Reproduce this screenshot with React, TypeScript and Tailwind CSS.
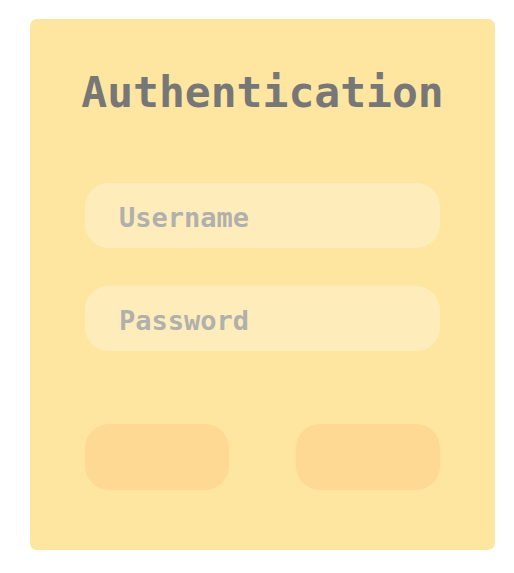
export default function App() {
  return (
    <div className="h-[573px] w-[514px] bg-white pt-[19px] pl-[30px]">
      <div className="flex h-[531px] w-[465px] flex-col items-center rounded-[7px] bg-[#fee6a1] pt-[52px] font-['DejaVu_Sans_Mono','Liberation_Mono',monospace]">
        <h1 className="text-[43px] leading-[43px] font-bold text-[#777777]">
          Authentication
        </h1>
        <div className="mt-[69px] flex w-[355px] flex-col gap-[38px]">
          <input
            placeholder="Username"
            className="h-[65px] w-full rounded-[24px] bg-[#feedbb] pt-[3px] pl-[34px] text-[27px] font-bold text-[#777777] outline-none placeholder:text-[#b0b0ad]"
          />
          <input
            type="password"
            placeholder="Password"
            className="h-[65px] w-full rounded-[24px] bg-[#feedbb] pt-[3px] pl-[34px] text-[27px] font-bold text-[#777777] outline-none placeholder:text-[#b0b0ad]"
          />
        </div>
        <div className="mt-[73px] flex w-[355px] justify-between">
          <button className="h-[66px] w-[144px] rounded-[24px] bg-[#fed994]" />
          <button className="h-[66px] w-[144px] rounded-[24px] bg-[#fed994]" />
        </div>
      </div>
    </div>
  );
}
